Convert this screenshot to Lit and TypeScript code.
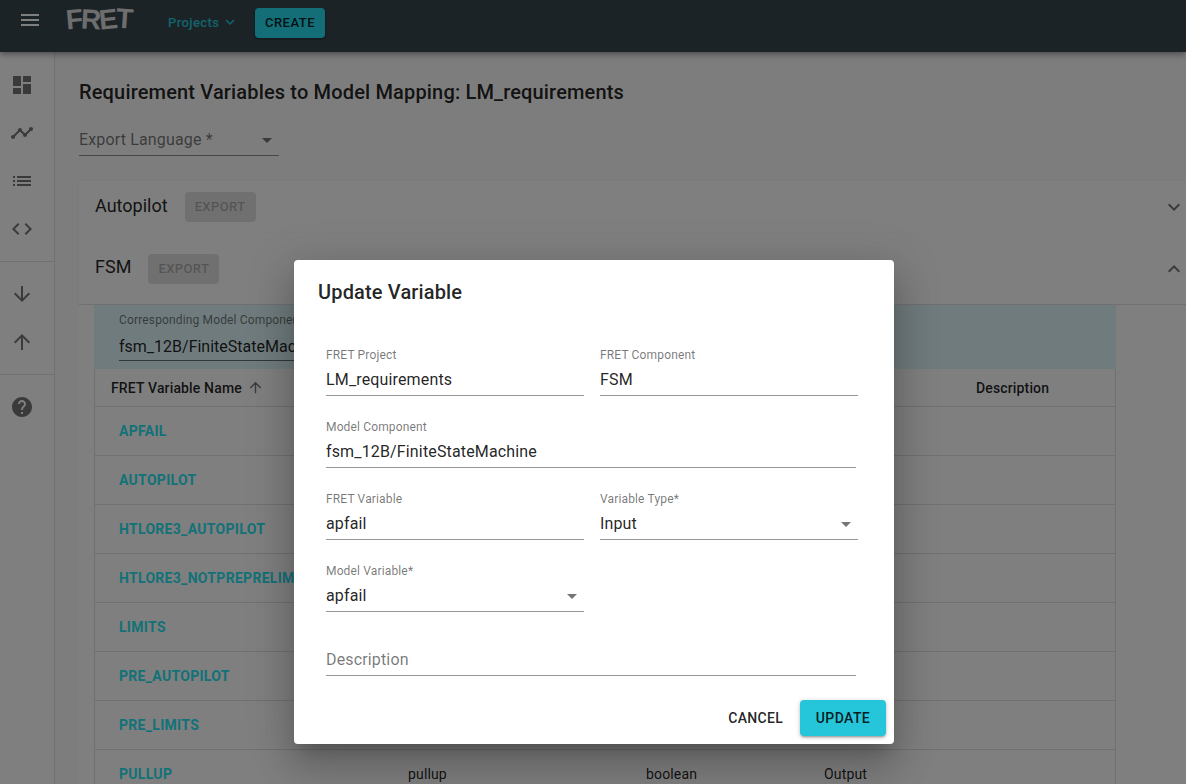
import { LitElement, html, css, svg, nothing } from 'lit';
import { customElement } from 'lit/decorators.js';

const ICONS: Record<string, string> = {
  menu: 'M3 18h18v-2H3v2zm0-5h18v-2H3v2zm0-7v2h18V6H3z',
  dashboard: 'M3 13h8V3H3v10zm0 8h8v-6H3v6zm10 0h8V11h-8v10zm0-18v6h8V3h-8z',
  timeline: 'M23 8c0 1.1-.9 2-2 2-.18 0-.35-.02-.51-.07l-3.56 3.55c.05.16.07.34.07.52 0 1.1-.9 2-2 2s-2-.9-2-2c0-.18.02-.36.07-.52l-2.55-2.55c-.16.05-.34.07-.52.07s-.36-.02-.52-.07l-4.55 4.56c.05.16.07.33.07.51 0 1.1-.9 2-2 2s-2-.9-2-2 .9-2 2-2c.18 0 .35.02.51.07l4.56-4.55C8.02 9.36 8 9.18 8 9c0-1.1.9-2 2-2s2 .9 2 2c0 .18-.02.36-.07.52l2.55 2.55c.16-.05.34-.07.52-.07s.36.02.52.07l3.55-3.56C19.02 8.35 19 8.18 19 8c0-1.1.9-2 2-2s2 .9 2 2z',
  list: 'M3 13h2v-2H3v2zm0 4h2v-2H3v2zm0-8h2V7H3v2zm4 4h14v-2H7v2zm0 4h14v-2H7v2zM7 7v2h14V7H7z',
  code: 'M9.4 16.6L4.8 12l4.6-4.6L8 6l-6 6 6 6 1.4-1.4zm5.2 0l4.6-4.6-4.6-4.6L16 6l6 6-6 6-1.4-1.4z',
  down: 'M20 12l-1.41-1.41L13 16.17V4h-2v12.17l-5.58-5.59L4 12l8 8 8-8z',
  up: 'M4 12l1.41 1.41L11 7.83V20h2V7.83l5.58 5.59L20 12l-8-8-8 8z',
  help: 'M12 2C6.48 2 2 6.48 2 12s4.48 10 10 10 10-4.48 10-10S17.52 2 12 2zm1 17h-2v-2h2v2zm2.07-7.75l-.9.92C13.45 12.9 13 13.5 13 15h-2v-.5c0-1.1.45-2.1 1.17-2.83l1.24-1.26c.37-.36.59-.86.59-1.41 0-1.1-.9-2-2-2s-2 .9-2 2H8c0-2.21 1.79-4 4-4s4 1.79 4 4c0 .88-.36 1.68-.93 2.25z',
  more: 'M16.59 8.59L12 13.17 7.41 8.59 6 10l6 6 6-6z',
  less: 'M12 8l-6 6 1.41 1.41L12 10.83l4.59 4.58L18 14z',
  drop: 'M7 10l5 5 5-5z',
};

const icon = (name: string, cls = '') => html`<svg class="icon ${cls}" viewBox="0 0 24 24">${svg`<path d=${ICONS[name]}></path>`}</svg>`;

const VARIABLES = [
  { name: 'APFAIL' },
  { name: 'AUTOPILOT' },
  { name: 'HTLORE3_AUTOPILOT' },
  { name: 'HTLORE3_NOTPREPRELIM' },
  { name: 'LIMITS' },
  { name: 'PRE_AUTOPILOT' },
  { name: 'PRE_LIMITS' },
  { name: 'PULLUP', model: 'pullup', type: 'boolean', usage: 'Output' },
];

@customElement('app-root')
export class AppRoot extends LitElement {
  static styles = css`
    :host {
      display: block;
      position: relative;
      height: 784px;
      overflow: hidden;
      background: #fafafa;
      font-family: Roboto, sans-serif;
      color: rgba(0, 0, 0, 0.87);
    }
    .icon {
      display: block;
      width: 24px;
      height: 24px;
      fill: rgba(0, 0, 0, 0.54);
      flex: none;
    }
    .topbar {
      height: 52px;
      background: #37474f;
      display: flex;
      align-items: center;
      padding: 0 0 6px 18px;
      box-shadow: 0 2px 4px -1px rgba(0,0,0,.2), 0 4px 5px 0 rgba(0,0,0,.14), 0 1px 10px 0 rgba(0,0,0,.12);
      position: relative;
      box-sizing: border-box;
    }
    .topbar .icon { fill: #fff; }
    .topbar .burger { margin-top: -6px; }
    .logo {
      margin-left: 24px;
      width: 102px;
      display: flex;
      font: 700 28px "Liberation Sans", sans-serif;
      letter-spacing: -2.1px;
      color: #dcdcdc;
      transform: translateY(-3px);
    }
    .logo span { display: inline-block; }
    .logo .f { transform: rotate(-5deg); }
    .logo .r { transform: rotate(3deg); }
    .logo .e { transform: rotate(-6deg); }
    .logo .t { transform: rotate(4deg) translateY(-1px); }
    .projects {
      display: flex;
      align-items: center;
      gap: 2px;
      margin-top: -2px;
      color: #26c6da;
      font-size: 13px;
      font-weight: 500;
      letter-spacing: 0.4px;
      width: 87px;
    }
    .topbar .projects .icon { fill: #26c6da; width: 18px; height: 18px; }
    .create {
      width: 70px;
      height: 30px;
      box-sizing: border-box;
      padding-bottom: 1px;
      display: flex;
      align-items: center;
      justify-content: center;
      background: #26dcef;
      color: rgba(0, 0, 0, 0.87);
      border-radius: 4px;
      font-size: 13px;
      font-weight: 500;
      letter-spacing: 0.5px;
      box-shadow: 0 1px 3px rgba(0,0,0,.4);
    }
    .body { display: flex; height: 732px; }
    .sidebar {
      width: 55px;
      flex: none;
      box-sizing: border-box;
      border-right: 1px solid rgba(0, 0, 0, 0.12);
      background: #fff;
      padding-top: 9px;
    }
    .nav { height: 48px; display: flex; align-items: center; padding-left: 10px; }
    .sep { height: 1px; background: rgba(0, 0, 0, 0.12); margin: 8px 0; }
    .main { flex: 1; min-width: 0; padding: 24px 0 0 24px; }
    h1 { margin: 0; font-size: 20px; line-height: 32px; font-weight: 500; letter-spacing: 0.16px; }
    .lang {
      margin-top: 17px;
      width: 200px;
      height: 31px;
      box-sizing: border-box;
      border-bottom: 1px solid rgba(0, 0, 0, 0.42);
      display: flex;
      align-items: center;
      justify-content: space-between;
      color: rgba(0, 0, 0, 0.54);
      font-size: 16px;
      letter-spacing: 0.15px;
    }
    .lang span { padding-bottom: 2px; }
    .accordion { margin-top: 25px; }
    .summary {
      background: #fff;
      display: flex;
      align-items: center;
      padding-left: 16px;
      height: 52px;
      font-size: 18px;
      box-shadow: 0 0 2px rgba(0,0,0,.06);
    }
    .summary.open { height: 72px; border-bottom: 1px solid rgba(0, 0, 0, 0.12); box-sizing: border-box; }
    .summary .name { padding-bottom: 3px; }
    .summary.open .name { padding-bottom: 4px; }
    .summary .grow { flex: 1; }
    .export {
      margin-left: 17px;
      width: 71px;
      height: 30px;
      box-sizing: border-box;
      padding-bottom: 1px;
      display: flex;
      align-items: center;
      justify-content: center;
      background: rgba(0, 0, 0, 0.12);
      color: rgba(0, 0, 0, 0.26);
      border-radius: 4px;
      font-size: 13px;
      font-weight: 500;
      letter-spacing: 0.4px;
    }
    .details { background: #fff; padding-left: 15px; }
    .table { width: 1022px; border-right: 1px solid rgba(0, 0, 0, 0.12); border-left: 1px solid rgba(0, 0, 0, 0.12); box-sizing: border-box; }
    .component {
      height: 64px;
      margin: 0 -1px;
      background: #e0f7fa;
      border-radius: 4px 4px 0 0;
      padding: 8px 0 0 25px;
      box-sizing: border-box;
    }
    .component .label { font-size: 12px; line-height: 14px; color: rgba(0, 0, 0, 0.54); letter-spacing: 0.15px; }
    .component .value {
      margin-top: 7px;
      width: 300px;
      font-size: 16px;
      line-height: 26px;
      border-bottom: 1px solid rgba(0, 0, 0, 0.55);
    }
    .row {
      display: grid;
      grid-template-columns: 297px 238px 178px 152px 155px;
      height: 49px;
      box-sizing: border-box;
      border-bottom: 1px solid rgba(0, 0, 0, 0.12);
      align-items: center;
      font-size: 14px;
      letter-spacing: 0.15px;
    }
    .row.head { height: 38px; font-weight: 500; }
    .row > div { padding-left: 16px; white-space: nowrap; }
    .sort { display: flex; align-items: center; gap: 5px; }
    .sort .icon { width: 17px; height: 17px; }
    .link { color: #26e3f0; font-weight: 700; font-size: 14px; letter-spacing: 0.3px; padding-left: 8px; }

    .backdrop {
      position: absolute;
      inset: 0;
      background: rgba(0, 0, 0, 0.5);
      padding: 260px 0 0 294px;
      box-sizing: border-box;
    }
    .dialog {
      width: 600px;
      height: 484px;
      background: #fff;
      border-radius: 4px;
      box-shadow: 0 11px 15px -7px rgba(0,0,0,.2), 0 24px 38px 3px rgba(0,0,0,.14), 0 9px 46px 8px rgba(0,0,0,.12);
    }
    h2 { margin: 0; padding: 16px 24px; font-size: 20px; line-height: 32px; font-weight: 500; letter-spacing: 0.15px; }
    .form {
      display: grid;
      grid-template-columns: 258px 258px;
      column-gap: 16px;
      row-gap: 24px;
      padding: 24px 0 0 32px;
    }
    .field {
      height: 48px;
      box-sizing: border-box;
      border-bottom: 1px solid rgba(0, 0, 0, 0.42);
    }
    .field.wide { grid-column: span 2; width: 530px; }
    .field.plain { height: 40px; }
    .field.start { grid-column: 1; }
    .field label { display: block; font-size: 12px; line-height: 14px; color: rgba(0, 0, 0, 0.54); letter-spacing: 0.15px; }
    .input { display: flex; align-items: center; justify-content: space-between; font-size: 16px; line-height: 19px; margin-top: 8px; height: 19px; letter-spacing: 0.15px; }
    .placeholder { font-size: 16px; line-height: 19px; padding-top: 14px; color: rgba(0, 0, 0, 0.54); letter-spacing: 0.15px; }
    .actions {
      display: flex;
      justify-content: flex-end;
      align-items: center;
      gap: 17px;
      padding: 24px 8px 0 0;
    }
    .cancel { font-size: 14px; font-weight: 500; letter-spacing: 0.3px; }
    .update {
      width: 86px;
      height: 36px;
      display: flex;
      align-items: center;
      justify-content: center;
      background: #26c6da;
      border-radius: 4px;
      font-size: 14px;
      font-weight: 500;
      letter-spacing: 0.4px;
      box-shadow: 0 1px 5px rgba(0,0,0,.2), 0 2px 2px rgba(0,0,0,.14), 0 3px 1px -2px rgba(0,0,0,.12);
    }
  `;

  private field(label: string, value: string, opts: { cls?: string; select?: boolean } = {}) {
    return html`<div class="field ${opts.cls ?? ''}">
      <label>${label}</label>
      <div class="input"><span>${value}</span>${opts.select ? icon('drop') : nothing}</div>
    </div>`;
  }

  render() {
    return html`
      <header class="topbar">
        ${icon('menu', 'burger')}
        <div class="logo"><span class="f">F</span><span class="r">R</span><span class="e">E</span><span class="t">T</span></div>
        <div class="projects">Projects ${icon('more')}</div>
        <div class="create">CREATE</div>
      </header>
      <div class="body">
        <nav class="sidebar">
          <div class="nav">${icon('dashboard')}</div>
          <div class="nav">${icon('timeline')}</div>
          <div class="nav">${icon('list')}</div>
          <div class="nav">${icon('code')}</div>
          <div class="sep"></div>
          <div class="nav">${icon('down')}</div>
          <div class="nav">${icon('up')}</div>
          <div class="sep"></div>
          <div class="nav">${icon('help')}</div>
        </nav>
        <main class="main">
          <h1>Requirement Variables to Model Mapping: LM_requirements</h1>
          <div class="lang"><span>Export Language *</span>${icon('drop')}</div>
          <div class="accordion">
            <div class="summary"><span class="name">Autopilot</span><div class="export">EXPORT</div><div class="grow"></div>${icon('more')}</div>
            <div class="summary open"><span class="name">FSM</span><div class="export">EXPORT</div><div class="grow"></div>${icon('less')}</div>
            <div class="details">
              <div class="table">
                <div class="component">
                  <div class="label">Corresponding Model Component</div>
                  <div class="value">fsm_12B/FiniteStateMachine</div>
                </div>
                <div class="row head">
                  <div class="sort">FRET Variable Name ${icon('up')}</div>
                  <div></div><div></div><div></div>
                  <div>Description</div>
                </div>
                ${VARIABLES.map(v => html`<div class="row">
                  <div><span class="link">${v.name}</span></div>
                  <div>${v.model ?? ''}</div>
                  <div>${v.type ?? ''}</div>
                  <div>${v.usage ?? ''}</div>
                  <div></div>
                </div>`)}
              </div>
            </div>
          </div>
        </main>
      </div>
      <div class="backdrop">
        <div class="dialog">
          <h2>Update Variable</h2>
          <div class="form">
            ${this.field('FRET Project', 'LM_requirements')}
            ${this.field('FRET Component', 'FSM')}
            ${this.field('Model Component', 'fsm_12B/FiniteStateMachine', { cls: 'wide' })}
            ${this.field('FRET Variable', 'apfail')}
            ${this.field('Variable Type*', 'Input', { select: true })}
            ${this.field('Model Variable*', 'apfail', { select: true, cls: 'start' })}
            <div class="field wide plain"><div class="placeholder">Description</div></div>
          </div>
          <div class="actions">
            <div class="cancel">CANCEL</div>
            <div class="update">UPDATE</div>
          </div>
        </div>
      </div>
    `;
  }
}
